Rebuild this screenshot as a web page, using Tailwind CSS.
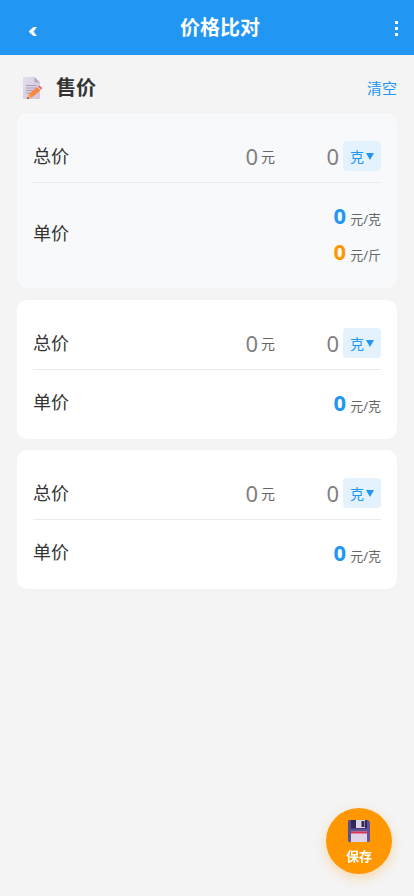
<!DOCTYPE html>
<html lang="zh-CN">
<head>
<meta charset="utf-8">
<meta name="viewport" content="width=device-width, initial-scale=1">
<title>价格比对</title>
<script src="https://cdn.jsdelivr.net/npm/@tailwindcss/browser@4"></script>
</head>
<body class="min-h-screen bg-[#f4f4f4] font-['Noto_Sans','Noto_Sans_CJK_SC',sans-serif] text-[#333]">
<header class="flex h-[55px] items-center bg-[#2196f3] px-4 pt-px text-white">
  <button type="button" aria-label="返回" class="flex h-10 w-[34px] items-center justify-center pt-2">
    <svg class="h-[10px] w-[8px]" viewBox="0 0 8 10" fill="currentColor"><path d="M4.500 0H8L4.500 4.700L8 9H4.500L0 5V4Z"/></svg>
  </button>
  <h1 class="flex-1 text-center text-[20px] leading-8 font-bold">价格比对</h1>
  <button type="button" aria-label="更多" class="flex h-10 w-2 items-center justify-end">
    <svg class="h-[15px] w-[3px]" viewBox="0 0 3 15" fill="currentColor"><path d="M0 0h3v3H0zM0 6h3v3H0zM0 12h3v3H0z"/></svg>
  </button>
</header>
<main class="px-[17px]">
  <div class="flex h-[58px] items-center justify-between pt-2 pl-[5px]">
    <h2 class="flex items-center gap-3 text-[20px] leading-8 font-bold">
      <svg class="h-[22px] w-[22px]" viewBox="0 0 22 22" aria-hidden="true">
        <defs><linearGradient id="paper" x1="0" y1="0" x2="1" y2="1"><stop offset="0" stop-color="#e3deea"/><stop offset="1" stop-color="#d3c5dc"/></linearGradient>
        <linearGradient id="pencil" x1="1" y1="0" x2="0" y2="1"><stop offset="0" stop-color="#ff7a45"/><stop offset="1" stop-color="#f9953d"/></linearGradient></defs>
        <path d="M1 0H12.500L18 5.500V22H1Z" fill="url(#paper)"/>
        <path d="M12.500 0L18 5.500H13.500Q12.500 5.500 12.500 4.500Z" fill="#b5a5c3"/>
        <path d="M4 8.500H14.500M4 11H14.500M4 13.500H12M4 16H10" stroke="#aaa2b3" stroke-width="1"/>
        <path d="M7 17L15 10L18.300 13.500L10 20.500L5 22Z" fill="url(#pencil)"/>
        <path d="M7 17L10 20.500L5 22Z" fill="#f9a26a"/>
        <path d="M5.700 20L7.200 21.300L5 22Z" fill="#4a3150"/>
        <path d="M15 10L16 9.200L19.200 12.600L18.300 13.500Z" fill="#d9d2dc"/>
        <path d="M16 9.200Q17.200 8.300 18.500 9.500L19.800 10.800Q20.500 11.500 19.200 12.600Z" fill="#f4515a"/>
      </svg>
      <span>售价</span>
    </h2>
    <button type="reset" form="prices" class="text-[15px] leading-6 text-[#2196f3]">清空</button>
  </div>
  <form id="prices" class="flex flex-col gap-[11px]">
    <section class="rounded-[10px] bg-[#f8f9fb] p-4">
      <div class="flex items-center border-b border-[#ebebeb] pt-3 pb-[11px]">
        <label for="p1" class="flex-1 text-[18px] leading-[30px]">总价</label>
        <input id="p1" placeholder="0" inputmode="decimal" class="h-[30px] w-20 text-right text-[22px] placeholder:text-[#808080]">
        <span class="ml-[3px] text-[14px] text-[#666]">元</span>
        <input aria-label="数量" placeholder="0" inputmode="decimal" class="h-[30px] w-16 text-right text-[22px] placeholder:text-[#808080]">
        <div class="relative ml-1 h-[30px] w-[38px]">
          <select aria-label="单位" class="block h-full w-full appearance-none rounded-[4px] bg-[#e3f2fd] pl-[7px] text-[14px] text-[#2196f3]"><option>克</option><option>斤</option></select>
          <svg class="pointer-events-none absolute top-3 right-[7px] h-[7px] w-2" viewBox="0 0 8 7" fill="#2196f3"><path d="M0 0H8L4 7Z"/></svg>
        </div>
      </div>
      <div class="flex items-center pt-[14px] pb-[3px]">
        <span class="flex-1 text-[18px]">单价</span>
        <div class="text-right">
          <p class="flex h-9 items-baseline justify-end gap-1 leading-9"><output class="text-[22px] font-bold text-[#2196f3]">0</output><span class="text-[13px] text-[#666]">元/克</span></p>
          <p class="flex h-9 items-baseline justify-end gap-1 leading-9"><output class="text-[22px] font-bold text-[#ff9800]">0</output><span class="text-[13px] text-[#666]">元/斤</span></p>
        </div>
      </div>
    </section>
    <section class="mt-px rounded-[10px] bg-white p-4">
      <div class="flex items-center border-b border-[#ebebeb] pt-3 pb-[11px]">
        <label for="p2" class="flex-1 text-[18px] leading-[30px]">总价</label>
        <input id="p2" placeholder="0" inputmode="decimal" class="h-[30px] w-20 text-right text-[22px] placeholder:text-[#808080]">
        <span class="ml-[3px] text-[14px] text-[#666]">元</span>
        <input aria-label="数量" placeholder="0" inputmode="decimal" class="h-[30px] w-16 text-right text-[22px] placeholder:text-[#808080]">
        <div class="relative ml-1 h-[30px] w-[38px]">
          <select aria-label="单位" class="block h-full w-full appearance-none rounded-[4px] bg-[#e3f2fd] pl-[7px] text-[14px] text-[#2196f3]"><option>克</option><option>斤</option></select>
          <svg class="pointer-events-none absolute top-3 right-[7px] h-[7px] w-2" viewBox="0 0 8 7" fill="#2196f3"><path d="M0 0H8L4 7Z"/></svg>
        </div>
      </div>
      <div class="flex items-center pt-[14px] pb-[3px]">
        <span class="flex-1 text-[18px]">单价</span>
        <p class="flex h-9 items-baseline justify-end gap-1 leading-9"><output class="text-[22px] font-bold text-[#2196f3]">0</output><span class="text-[13px] text-[#666]">元/克</span></p>
      </div>
    </section>
    <section class="rounded-[10px] bg-white p-4">
      <div class="flex items-center border-b border-[#ebebeb] pt-3 pb-[11px]">
        <label for="p3" class="flex-1 text-[18px] leading-[30px]">总价</label>
        <input id="p3" placeholder="0" inputmode="decimal" class="h-[30px] w-20 text-right text-[22px] placeholder:text-[#808080]">
        <span class="ml-[3px] text-[14px] text-[#666]">元</span>
        <input aria-label="数量" placeholder="0" inputmode="decimal" class="h-[30px] w-16 text-right text-[22px] placeholder:text-[#808080]">
        <div class="relative ml-1 h-[30px] w-[38px]">
          <select aria-label="单位" class="block h-full w-full appearance-none rounded-[4px] bg-[#e3f2fd] pl-[7px] text-[14px] text-[#2196f3]"><option>克</option><option>斤</option></select>
          <svg class="pointer-events-none absolute top-3 right-[7px] h-[7px] w-2" viewBox="0 0 8 7" fill="#2196f3"><path d="M0 0H8L4 7Z"/></svg>
        </div>
      </div>
      <div class="flex items-center pt-[14px] pb-[3px]">
        <span class="flex-1 text-[18px]">单价</span>
        <p class="flex h-9 items-baseline justify-end gap-1 leading-9"><output class="text-[22px] font-bold text-[#2196f3]">0</output><span class="text-[13px] text-[#666]">元/克</span></p>
      </div>
    </section>
  </form>
</main>
<button type="button" class="fixed right-[22px] bottom-[22px] flex size-[66px] flex-col items-center gap-1 rounded-full bg-[#ff9800] pt-3 text-[13px] leading-5 font-bold text-white shadow-[0_4px_12px_rgba(255,152,0,0.3)]">
  <svg class="h-[22px] w-[22px]" viewBox="0 0 22 22" aria-hidden="true">
    <defs><linearGradient id="disk" x1="0" y1="0" x2="1" y2="1"><stop offset="0" stop-color="#534a88"/><stop offset="1" stop-color="#64599f"/></linearGradient></defs>
    <path d="M1.500 0H20L22 2V20.500Q22 22 20.500 22H1.500Q0 22 0 20.500V1.500Q0 0 1.500 0Z" fill="url(#disk)"/>
    <path d="M3 0H19V8.500H3Z" fill="#30275a"/>
    <path d="M8 0H17V8H8Z" fill="#ddd5e6"/>
    <path d="M13.500 1H16.500V7H13.500Z" fill="#332857"/>
    <path d="M3 11.500H19V22H3Z" fill="#ded3e6"/>
    <path d="M3 11.500H19V13.500H3Z" fill="#df3455"/>
  </svg>
  <span>保存</span>
</button>
</body>
</html>
